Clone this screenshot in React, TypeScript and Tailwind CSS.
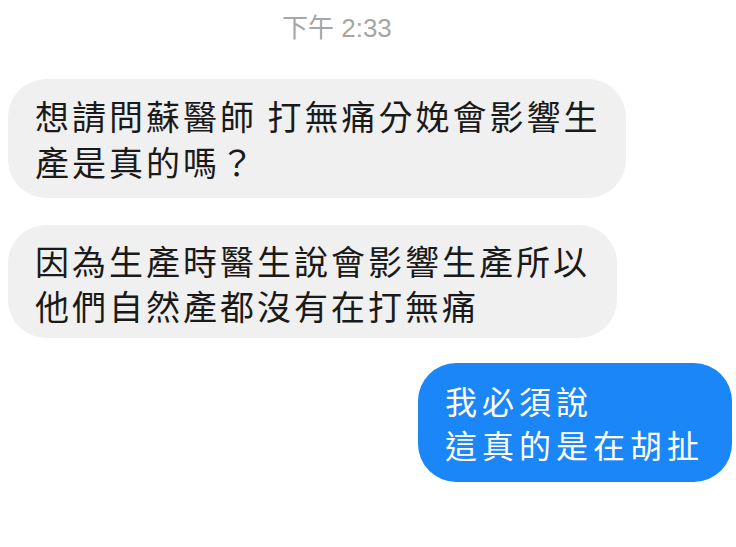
const cjk = { fontFamily: '"Noto Sans CJK TC", "Noto Sans CJK SC", sans-serif' };

function Bubble({ lines, mine, className }: { lines: string[]; mine?: boolean; className: string }) {
  return (
    <div
      style={cjk}
      className={`whitespace-nowrap rounded-[38px] ${mine ? 'bg-[#1b86f8] text-white' : 'bg-[#f0f0f0] text-[#1a1a1a]'} ${className}`}
    >
      {lines.map((line) => (
        <div key={line}>{line}</div>
      ))}
    </div>
  );
}

export default function App() {
  return (
    <div className="h-[547px] w-[736px] overflow-hidden bg-white">
      <div
        className="pl-[282px] pt-[12px] text-[26px] leading-[32px] text-[#a6a6a6]"
        style={{ fontFamily: '"Liberation Sans", "Noto Sans CJK TC", sans-serif' }}
      >
        下午 2:33
      </div>

      <div className="mt-[35px] flex flex-col">
        <Bubble
          className="ml-[8px] w-[618px] pl-[27px] pt-[14px] pb-[13px] text-[34px] leading-[46px] tracking-[3px]"
          lines={['想請問蘇醫師 打無痛分娩會影響生', '產是真的嗎？']}
        />
        <Bubble
          className="ml-[8px] mt-[27px] w-[609px] pl-[27px] pt-[13px] pb-[10px] text-[34px] leading-[45px] tracking-[3px]"
          lines={['因為生產時醫生說會影響生產所以', '他們自然產都沒有在打無痛']}
        />
        <Bubble
          mine
          className="ml-[418px] mt-[25px] w-[314px] pl-[27px] pt-[15px] pb-[16px] text-[32px] leading-[44px] tracking-[5px]"
          lines={['我必須說', '這真的是在胡扯']}
        />
      </div>
    </div>
  );
}
